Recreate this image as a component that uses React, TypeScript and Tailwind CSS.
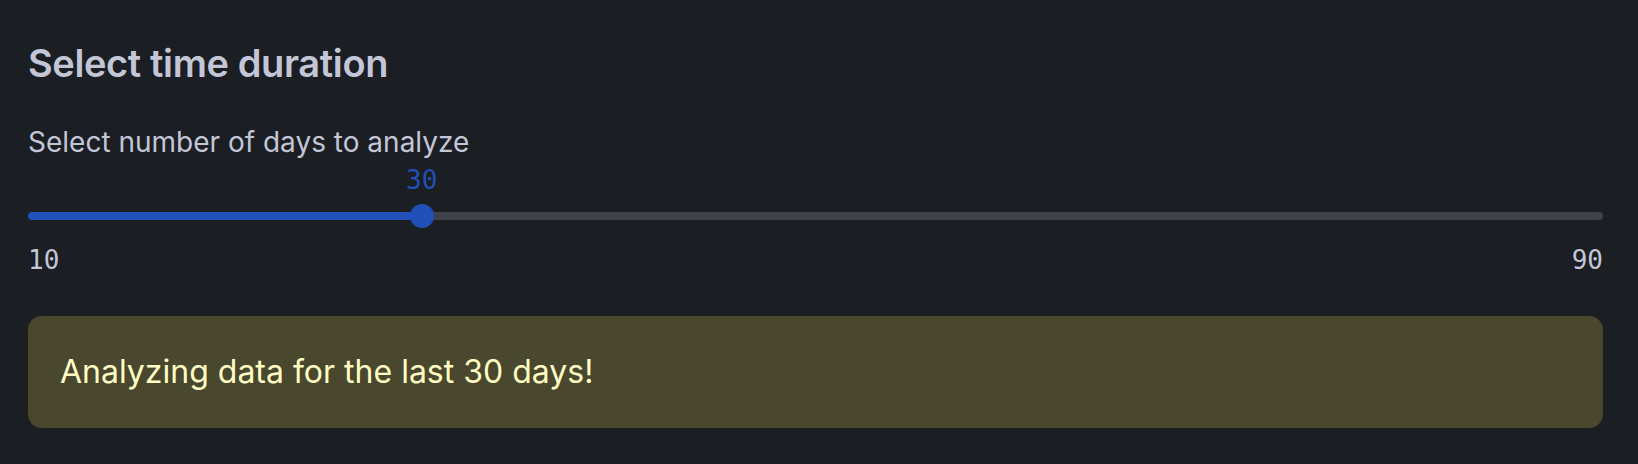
import React from 'react'

const MIN = 10
const MAX = 90
const VALUE = 30

export default function App() {
  const pct = ((VALUE - MIN) / (MAX - MIN)) * 100

  return (
    <div
      className="h-[464px] w-full bg-[#1b1e23] pl-[28px] pr-[35px] pt-[44px] text-[#c3c6d7] [font-family:Inter,'Noto_Sans',sans-serif]"
    >
      <h3 className="text-[38px] font-semibold leading-none tracking-[-0.01em]">Select time duration</h3>

      <p className="mt-[46px] text-[28px] leading-none">Select number of days to analyze</p>

      {/* Slider */}
      <div className="mt-[11px] w-full [font-family:'DejaVu_Sans_Mono',monospace]">
        <div className="relative h-[26px]">
          <span
            className="absolute top-0 -translate-x-1/2 text-[26px] leading-none text-[#2150b8]"
            style={{ left: `${pct}%` }}
          >
            {VALUE}
          </span>
        </div>
        <div className="relative mt-[19px] h-[8px] w-full rounded-full bg-[#3d424b]">
          <div className="h-full rounded-full bg-[#2150b8]" style={{ width: `${pct}%` }} />
          <div
            className="absolute top-1/2 h-[24px] w-[24px] -translate-x-1/2 -translate-y-1/2 rounded-full bg-[#2150b8]"
            style={{ left: `${pct}%` }}
          />
        </div>
        <div className="mt-[27px] flex justify-between text-[26px] leading-none">
          <span>{MIN}</span>
          <span>{MAX}</span>
        </div>
      </div>

      {/* Alert */}
      <div className="mt-[43px] flex h-[112px] items-center rounded-[14px] bg-[#49472e] px-[32px]">
        <span className="text-[32px] leading-none text-[#fffdc3]">Analyzing data for the last {VALUE} days!</span>
      </div>
    </div>
  )
}
